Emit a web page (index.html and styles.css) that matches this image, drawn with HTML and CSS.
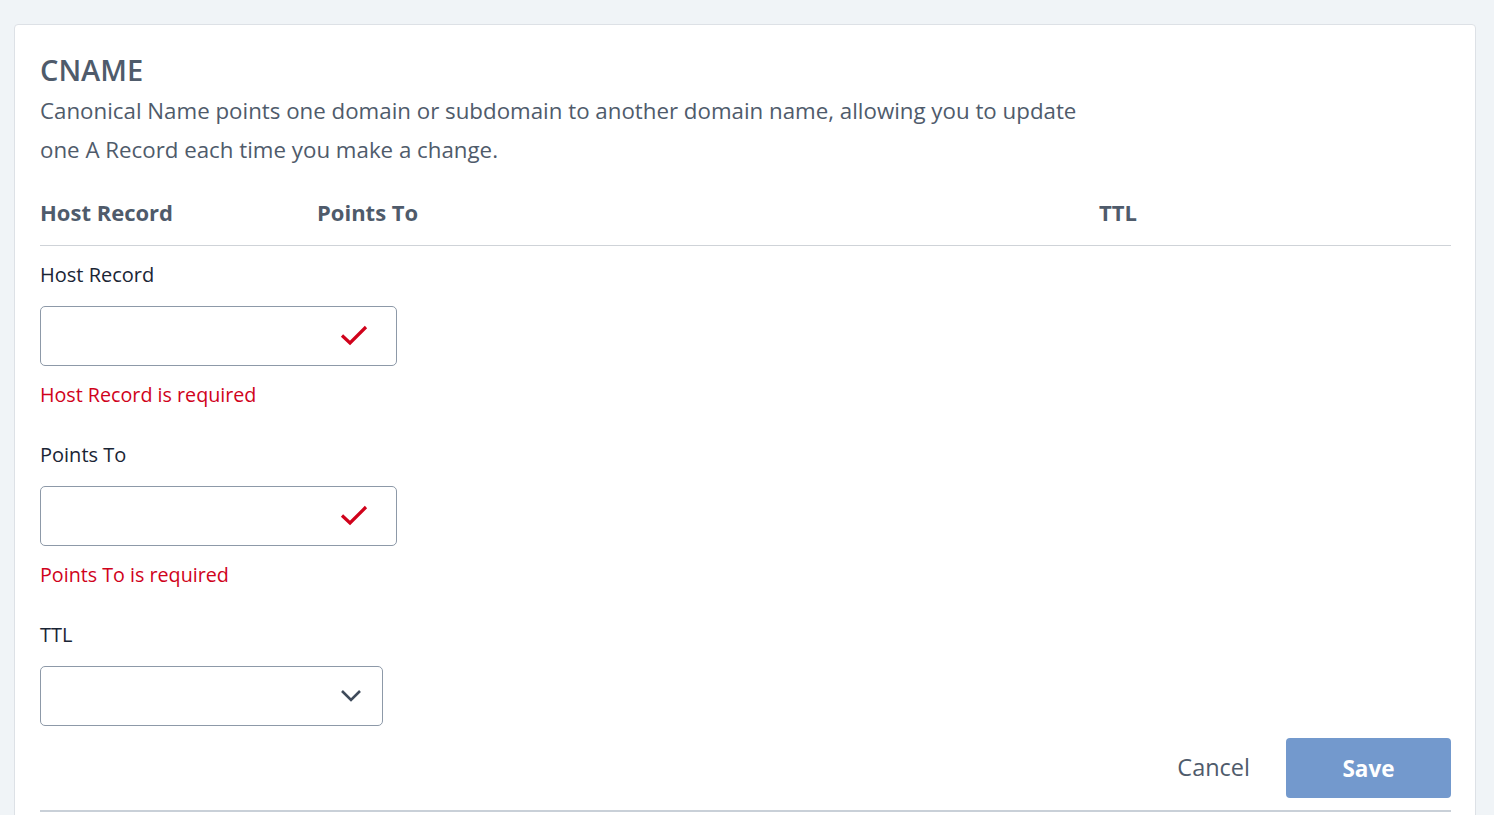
FILE: index.html
```html
<!DOCTYPE html>
<html lang="en">
<head>
<meta charset="utf-8">
<title>CNAME</title>
<link rel="stylesheet" href="styles.css">
</head>
<body>
<div class="page">
  <section class="card">
    <h1 class="title">CNAME</h1>
    <p class="desc">Canonical Name points one domain or subdomain to another domain name, allowing you to update one A Record each time you make a change.</p>
    <div class="table-head">
      <div class="col col-host">Host Record</div>
      <div class="col col-points">Points To</div>
      <div class="col col-ttl">TTL</div>
    </div>
    <form class="form">
      <div class="field">
        <label class="label">Host Record</label>
        <div class="input">
          <svg class="check" width="28" height="22" viewBox="0 0 28 22"><path d="M2 11.5 L10 19 L26 3" fill="none" stroke="#d0021b" stroke-width="3.2"/></svg>
        </div>
        <div class="error">Host Record is required</div>
      </div>
      <div class="field">
        <label class="label">Points To</label>
        <div class="input">
          <svg class="check" width="28" height="22" viewBox="0 0 28 22"><path d="M2 11.5 L10 19 L26 3" fill="none" stroke="#d0021b" stroke-width="3.2"/></svg>
        </div>
        <div class="error">Points To is required</div>
      </div>
      <div class="field">
        <label class="label">TTL</label>
        <div class="select">
          <svg class="chev" width="22" height="14" viewBox="0 0 22 14"><path d="M2 2 L11 11 L20 2" fill="none" stroke="#3f4b5b" stroke-width="2.6"/></svg>
        </div>
      </div>
      <div class="actions">
        <button type="button" class="btn-cancel">Cancel</button>
        <button type="button" class="btn-save">Save</button>
      </div>
    </form>
    <div class="bottom-rule"></div>
  </section>
</div>
</body>
</html>
```
FILE: styles.css
```css
* { box-sizing: border-box; }
html, body { margin: 0; padding: 0; }
body {
  background: #f0f4f7;
  font-family: "Open Sans", Lato, sans-serif;
  color: #4f5b6b;
  height: 815px;
  overflow: hidden;
}
.page { padding: 24px 18px 0 14px; }
.card {
  background: #fff;
  border: 1px solid #dde1e6;
  border-radius: 4px;
  padding: 28px 24px 0 25px;
  height: 800px;
}
.title {
  margin: 0;
  font-size: 29px;
  font-weight: 600;
  color: #4f5b6b;
  line-height: 34px;
}
.desc {
  margin: 4px 0 0;
  font-size: 22.3px;
  line-height: 39px;
  color: #4f5b6b;
  max-width: 1060px;
}
.table-head {
  display: flex;
  margin-top: 22px;
  height: 55px;
  padding-top: 2px;
  border-bottom: 1px solid #cfd3d8;
  font-size: 22px;
  font-weight: 700;
  color: #4f5b6b;
  line-height: 38px;
}
.col-host { width: 277px; }
.col-points { width: 782px; }
.form { padding-top: 15px; }
.field { display: flex; flex-direction: column; }
.label {
  font-size: 20px;
  font-weight: 500;
  color: #1a2535;
  line-height: 28px;
  margin-bottom: 17px;
}
.input, .select {
  height: 60px;
  border: 1px solid #8d99a8;
  border-radius: 5px;
  display: flex;
  align-items: center;
  justify-content: flex-end;
}
.input { width: 357px; padding-right: 28px; }
.select { width: 343px; padding-right: 20px; }
.check { display: block; margin-top: -2px; }
.chev { display: block; }
.error {
  color: #d0021b;
  font-size: 19.7px;
  line-height: 28px;
  margin-top: 15px;
  margin-bottom: 32px;
}
.actions {
  display: flex;
  justify-content: flex-end;
  align-items: center;
  gap: 36px;
  margin-top: 12px;
}
.btn-cancel {
  background: none;
  border: 0;
  padding: 0 0 2px;
  font-family: inherit;
  font-size: 23.5px;
  color: #4f5b6b;
  cursor: pointer;
}
.btn-save {
  width: 165px;
  height: 60px;
  background: #7399cd;
  border: 0;
  border-radius: 4px;
  color: #fff;
  font-family: inherit;
  font-size: 22.5px;
  font-weight: 700;
  cursor: pointer;
}
.bottom-rule {
  margin-top: 12px;
  height: 2px;
  background: #c9d0d8;
}
```
